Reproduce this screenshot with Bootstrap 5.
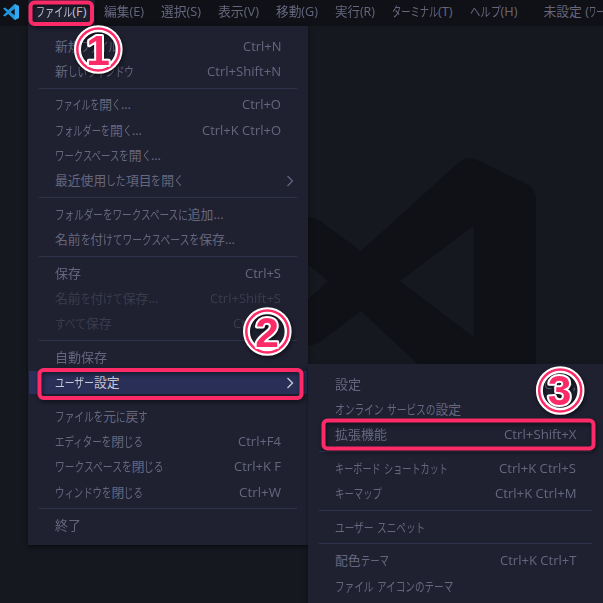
<!DOCTYPE html>
<html lang="ja">
<head>
<meta charset="utf-8">
<meta name="viewport" content="width=device-width, initial-scale=1">
<title>Visual Studio Code</title>
<link rel="stylesheet" href="https://cdn.jsdelivr.net/npm/bootstrap@5.3.0/dist/css/bootstrap.min.css">
<style>
  body { width: 603px; height: 603px; background: #15181f; color: #66677f;
    font: 400 12.8px/1 "Open Sans", "Noto Sans CJK JP", sans-serif; }
  .menubar { height: 26px; background: #101116; }
  .app-logo { width: 16px; height: 16px; margin-left: 3px; margin-top: -3px; }
  .tabs { gap: 17px; margin-left: 17px; }
  .tab { height: 26px; padding-bottom: 3px; position: relative; }
  .tab.open { color: #c3c5d0; background: #1f2131; margin: 0 -8px; padding-left: 8px; padding-right: 8px; }
  .tab.doc { margin-left: 9px; }
  .workspace { height: 577px; }
  .watermark { position: absolute; left: 0; top: 0; }
  .menu { position: absolute; background: #1f2131; padding: 7.3px 0 0; box-shadow: 0 2px 4px rgba(0,0,0,.5); }
  .menu-file { left: 28px; top: 26px; width: 280px; height: 519px; }
  .menu-prefs { left: 308px; top: 364px; width: 295px; height: 239px; }
  .entry { height: 25.28px; padding: 0 27px; }
  .entry > svg { width: 8px; height: 12px; margin-right: -13px; }
  .entry.off { color: #3a3c4d; }
  .entry.active { color: #c5c8d6; background: linear-gradient(#292f56, #292f56) center/278px 23px no-repeat; }
  .rule { height: 8.4px; padding: 3.7px 11px 0; }
  .rule::before { content: ""; display: block; height: 1px; background: #2f334a; }
  .fit { display: inline-block; white-space: pre; transform-origin: 0 50%; }
  .fit span { display: inline-block; transform-origin: 0 50%; }
  .marks { position: absolute; left: 0; top: 0; filter: drop-shadow(1px 2px 2px rgba(0,0,0,.55)); }
  .marks text { font: 700 42.5px "Liberation Sans", Arial, sans-serif; }
</style>
<script src="https://cdn.jsdelivr.net/npm/bootstrap@5.3.0/dist/js/bootstrap.bundle.min.js"></script>
</head>
<body class="position-relative overflow-hidden m-0">
<header class="menubar d-flex align-items-center overflow-hidden">
  <svg class="app-logo flex-shrink-0" viewBox="0 0 16 16"><path d="M11.7 0 15.3 1.7Q16 2 16 3v10q0 1-.7 1.3L11.7 16 5.2 10 2 12.5 0 11.6 3.7 8 0 4.4 2 3.5 5.2 6zM12 4.6 7.6 8 12 11.4z" fill="#2196dd" fill-rule="evenodd"/><path d="M11.7 0 15.3 1.7Q16 2 16 3v10q0 1-.7 1.3L11.7 16z" fill="#35a9f2"/></svg>
  <nav class="tabs d-flex flex-shrink-0">
    <div class="tab open d-flex align-items-center"><span class="fit" data-w="50.5">ファイル(F)</span></div>
    <div class="tab d-flex align-items-center"><span class="fit" data-w="40">編集(E)</span></div>
    <div class="tab d-flex align-items-center"><span class="fit" data-w="40">選択(S)</span></div>
    <div class="tab d-flex align-items-center"><span class="fit" data-w="41">表示(V)</span></div>
    <div class="tab d-flex align-items-center"><span class="fit" data-w="42">移動(G)</span></div>
    <div class="tab d-flex align-items-center"><span class="fit" data-w="40">実行(R)</span></div>
    <div class="tab d-flex align-items-center"><span class="fit" data-w="61">ターミナル(T)</span></div>
    <div class="tab d-flex align-items-center"><span class="fit" data-w="48">ヘルプ(H)</span></div>
    <div class="tab doc d-flex align-items-center"><span class="fit" data-w="60">未設定 (ワー</span></div>
  </nav>
</header>
<main class="workspace"></main>
<svg class="watermark" width="603" height="603"><path fill="#101116" fill-rule="evenodd" d="M361 251 458 163Q466 156 476 159.500L527 184Q536 189 536 199V370H424L361 311 320 342Q314 346 308 345V299L328 281 308 264V217Q314 217 319 220zM400 281 473.500 337V226z"/></svg>

<div class="menu menu-file">
  <div class="entry d-flex align-items-center justify-content-between"><span class="fit" data-w="62">新規ファイル</span><span class="fit" data-w="38.5">Ctrl+N</span></div>
  <div class="entry d-flex align-items-center justify-content-between"><span class="fit" data-w="78.5">新しいウィンドウ</span><span class="fit" data-w="74">Ctrl+Shift+N</span></div>
  <div class="rule"></div>
  <div class="entry d-flex align-items-center justify-content-between"><span class="fit" data-w="76">ファイルを開く...</span><span class="fit" data-w="39">Ctrl+O</span></div>
  <div class="entry d-flex align-items-center justify-content-between"><span class="fit" data-w="87">フォルダーを開く...</span><span class="fit" data-w="79">Ctrl+K Ctrl+O</span></div>
  <div class="entry d-flex align-items-center justify-content-between"><span class="fit" data-w="106">ワークスペースを開く...</span></div>
  <div class="entry d-flex align-items-center justify-content-between"><span class="fit" data-w="129">最近使用した項目を開く</span><svg viewBox="0 0 8 12"><path d="M1.500 1 6.500 6 1.500 11" fill="none" stroke="currentColor" stroke-width="1.2"/></svg></div>
  <div class="rule"></div>
  <div class="entry d-flex align-items-center justify-content-between"><span class="fit" data-w="168.5">フォルダーをワークスペースに追加...</span></div>
  <div class="entry d-flex align-items-center justify-content-between"><span class="fit" data-w="180">名前を付けてワークスペースを保存...</span></div>
  <div class="rule"></div>
  <div class="entry d-flex align-items-center justify-content-between"><span class="fit" data-w="26">保存</span><span class="fit" data-w="36">Ctrl+S</span></div>
  <div class="entry off d-flex align-items-center justify-content-between"><span class="fit" data-w="103.5">名前を付けて保存...</span><span class="fit" data-w="71">Ctrl+Shift+S</span></div>
  <div class="entry off d-flex align-items-center justify-content-between"><span class="fit" data-w="56.5">すべて保存</span><span class="fit" data-w="48">Ctrl+K S</span></div>
  <div class="rule"></div>
  <div class="entry d-flex align-items-center justify-content-between"><span class="fit" data-w="52">自動保存</span></div>
  <div class="entry active d-flex align-items-center justify-content-between"><span class="fit" data-w="64.5">ユーザー設定</span><svg viewBox="0 0 8 12"><path d="M1.500 1 6.500 6 1.500 11" fill="none" stroke="currentColor" stroke-width="1.4"/></svg></div>
  <div class="rule"></div>
  <div class="entry d-flex align-items-center justify-content-between"><span class="fit" data-w="93">ファイルを元に戻す</span></div>
  <div class="entry d-flex align-items-center justify-content-between"><span class="fit" data-w="88">エディターを閉じる</span><span class="fit" data-w="43">Ctrl+F4</span></div>
  <div class="entry d-flex align-items-center justify-content-between"><span class="fit" data-w="109">ワークスペースを閉じる</span><span class="fit" data-w="47">Ctrl+K F</span></div>
  <div class="entry d-flex align-items-center justify-content-between"><span class="fit" data-w="88">ウィンドウを閉じる</span><span class="fit" data-w="42">Ctrl+W</span></div>
  <div class="rule"></div>
  <div class="entry d-flex align-items-center justify-content-between"><span class="fit" data-w="26">終了</span></div>
</div>

<div class="menu menu-prefs">
  <div class="entry d-flex align-items-center justify-content-between"><span class="fit" data-w="26">設定</span><span class="fit" data-w="32">Ctrl+,</span></div>
  <div class="entry d-flex align-items-center justify-content-between"><span class="fit" data-w="126">オンライン サービスの設定</span></div>
  <div class="entry d-flex align-items-center justify-content-between"><span class="fit" data-w="52">拡張機能</span><span class="fit" data-w="72.5">Ctrl+Shift+X</span></div>
  <div class="rule"></div>
  <div class="entry d-flex align-items-center justify-content-between"><span class="fit" data-w="113">キーボード ショートカット</span><span class="fit" data-w="77">Ctrl+K Ctrl+S</span></div>
  <div class="entry d-flex align-items-center justify-content-between"><span class="fit" data-w="47">キーマップ</span><span class="fit" data-w="81.5">Ctrl+K Ctrl+M</span></div>
  <div class="rule"></div>
  <div class="entry d-flex align-items-center justify-content-between"><span class="fit" data-w="90">ユーザー スニペット</span></div>
  <div class="rule"></div>
  <div class="entry d-flex align-items-center justify-content-between"><span class="fit" data-w="53.5">配色テーマ</span><span class="fit" data-w="76.5">Ctrl+K Ctrl+T</span></div>
  <div class="entry d-flex align-items-center justify-content-between"><span class="fit" data-w="118">ファイル アイコンのテーマ</span></div>
</div>

<svg class="marks" width="603" height="603">
  <g fill="none" stroke="#fc2b68" stroke-width="4">
    <rect x="30.500" y="2.500" width="61.500" height="21.500" rx="4"/>
    <rect x="39.500" y="370" width="262" height="28" rx="4"/>
    <rect x="323.500" y="420.500" width="270" height="28" rx="4"/>
  </g>
  <g fill="none" stroke="#fff" stroke-width="7"><circle cx="98.300" cy="49.500" r="20.800"/><circle cx="267.300" cy="331.500" r="20.800"/><circle cx="560.200" cy="390.500" r="20.800"/></g>
  <g fill="none" stroke="#fc2b68" stroke-width="2.500"><circle cx="98.300" cy="49.500" r="21"/><circle cx="267.300" cy="331.500" r="21"/><circle cx="560.200" cy="390.500" r="21"/></g>
  <g fill="#fc2b68" stroke="#fff" stroke-width="4" stroke-linejoin="round" paint-order="stroke" text-anchor="middle">
    <text x="98" y="64.500">1</text><text x="267" y="346.500">2</text><text x="559.500" y="405">3</text>
  </g>
</svg>
<script>
  document.querySelectorAll('.fit').forEach(el => {
    const target = +el.dataset.w;
    const parts = el.textContent.match(/[\u3040-\u30ff]+|[^\u3040-\u30ff]+/g);
    el.textContent = '';
    const runs = parts.map(t => {
      const s = document.createElement('span');
      s.textContent = t;
      el.append(s);
      return { s, kana: /[\u3040-\u30ff]/.test(t), w: s.getBoundingClientRect().width };
    });
    const sum = k => runs.filter(r => r.kana === k).reduce((a, r) => a + r.w, 0);
    const kana = sum(true), rest = sum(false);
    const kKana = kana ? (target - rest) / kana : 1;
    const kRest = kana ? 1 : target / rest;
    runs.forEach(r => {
      const k = r.kana ? kKana : kRest;
      r.s.style.width = r.w * k + 'px';
      r.s.style.transform = `scaleX(${k})`;
    });
    el.style.width = target + 'px';
  });
</script>
</body>
</html>
